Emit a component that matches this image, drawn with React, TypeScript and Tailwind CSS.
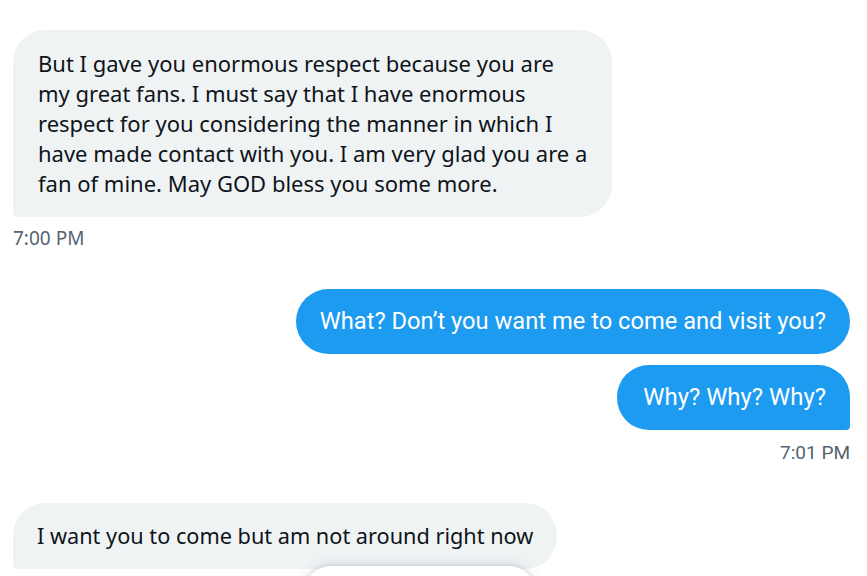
import React from "react";

const gray = "font-['Noto_Sans','Open_Sans',sans-serif]";
const blueFont = "font-['Roboto','Liberation_Sans',sans-serif]";

export default function App() {
  return (
    <div className="relative h-[576px] w-[867px] overflow-hidden bg-white">
      <div className="flex flex-col pt-[30px] pl-[13px] pr-[17px]">
        <div className="flex">
          <div
            className={`${gray} w-[599px] rounded-[32px] rounded-bl-[4px] bg-[#eff3f4] px-[25px] pt-[18px] pb-[19px] text-[22px] leading-[30px] text-[#0f1419] whitespace-nowrap`}
          >
            But I gave you enormous respect because you are
            <br />
            my great fans. I must say that I have enormous
            <br />
            respect for you considering the manner in which I
            <br />
            have made contact with you. I am very glad you are a
            <br />
            fan of mine. May GOD bless you some more.
          </div>
        </div>
        <div className={`${gray} mt-[9px] text-[19px] leading-[24px] text-[#536471]`}>
          7:00 PM
        </div>

        <div className="mt-[39px] flex justify-end">
          <div
            className={`${blueFont} h-[65px] flex items-center rounded-full bg-[#1d9bf0] px-[24px] text-[23.7px] text-white whitespace-nowrap`}
          >
            What? Don’t you want me to come and visit you?
          </div>
        </div>
        <div className="mt-[11px] flex justify-end">
          <div
            className={`${blueFont} h-[65px] flex items-center rounded-[32px] rounded-br-[4px] bg-[#1d9bf0] pl-[26px] pr-[24px] text-[23.9px] text-white whitespace-nowrap`}
          >
            Why? Why? Why?
          </div>
        </div>
        <div className={`${blueFont} mt-[11px] text-right text-[19px] leading-[24px] text-[#536471]`}>
          7:01 PM
        </div>

        <div className="mt-[38px] flex">
          <div
            className={`${gray} h-[66px] flex items-center rounded-[32px] rounded-bl-[4px] bg-[#eff3f4] px-[24px] text-[21.7px] text-[#0f1419] whitespace-nowrap`}
          >
            I want you to come but am not around right now
          </div>
        </div>
      </div>
      <div className="absolute left-[305px] top-[566px] h-[50px] w-[230px] rounded-full bg-white shadow-[0_0_12px_rgba(101,119,134,0.25),0_0_3px_1px_rgba(101,119,134,0.15)]" />
    </div>
  );
}
